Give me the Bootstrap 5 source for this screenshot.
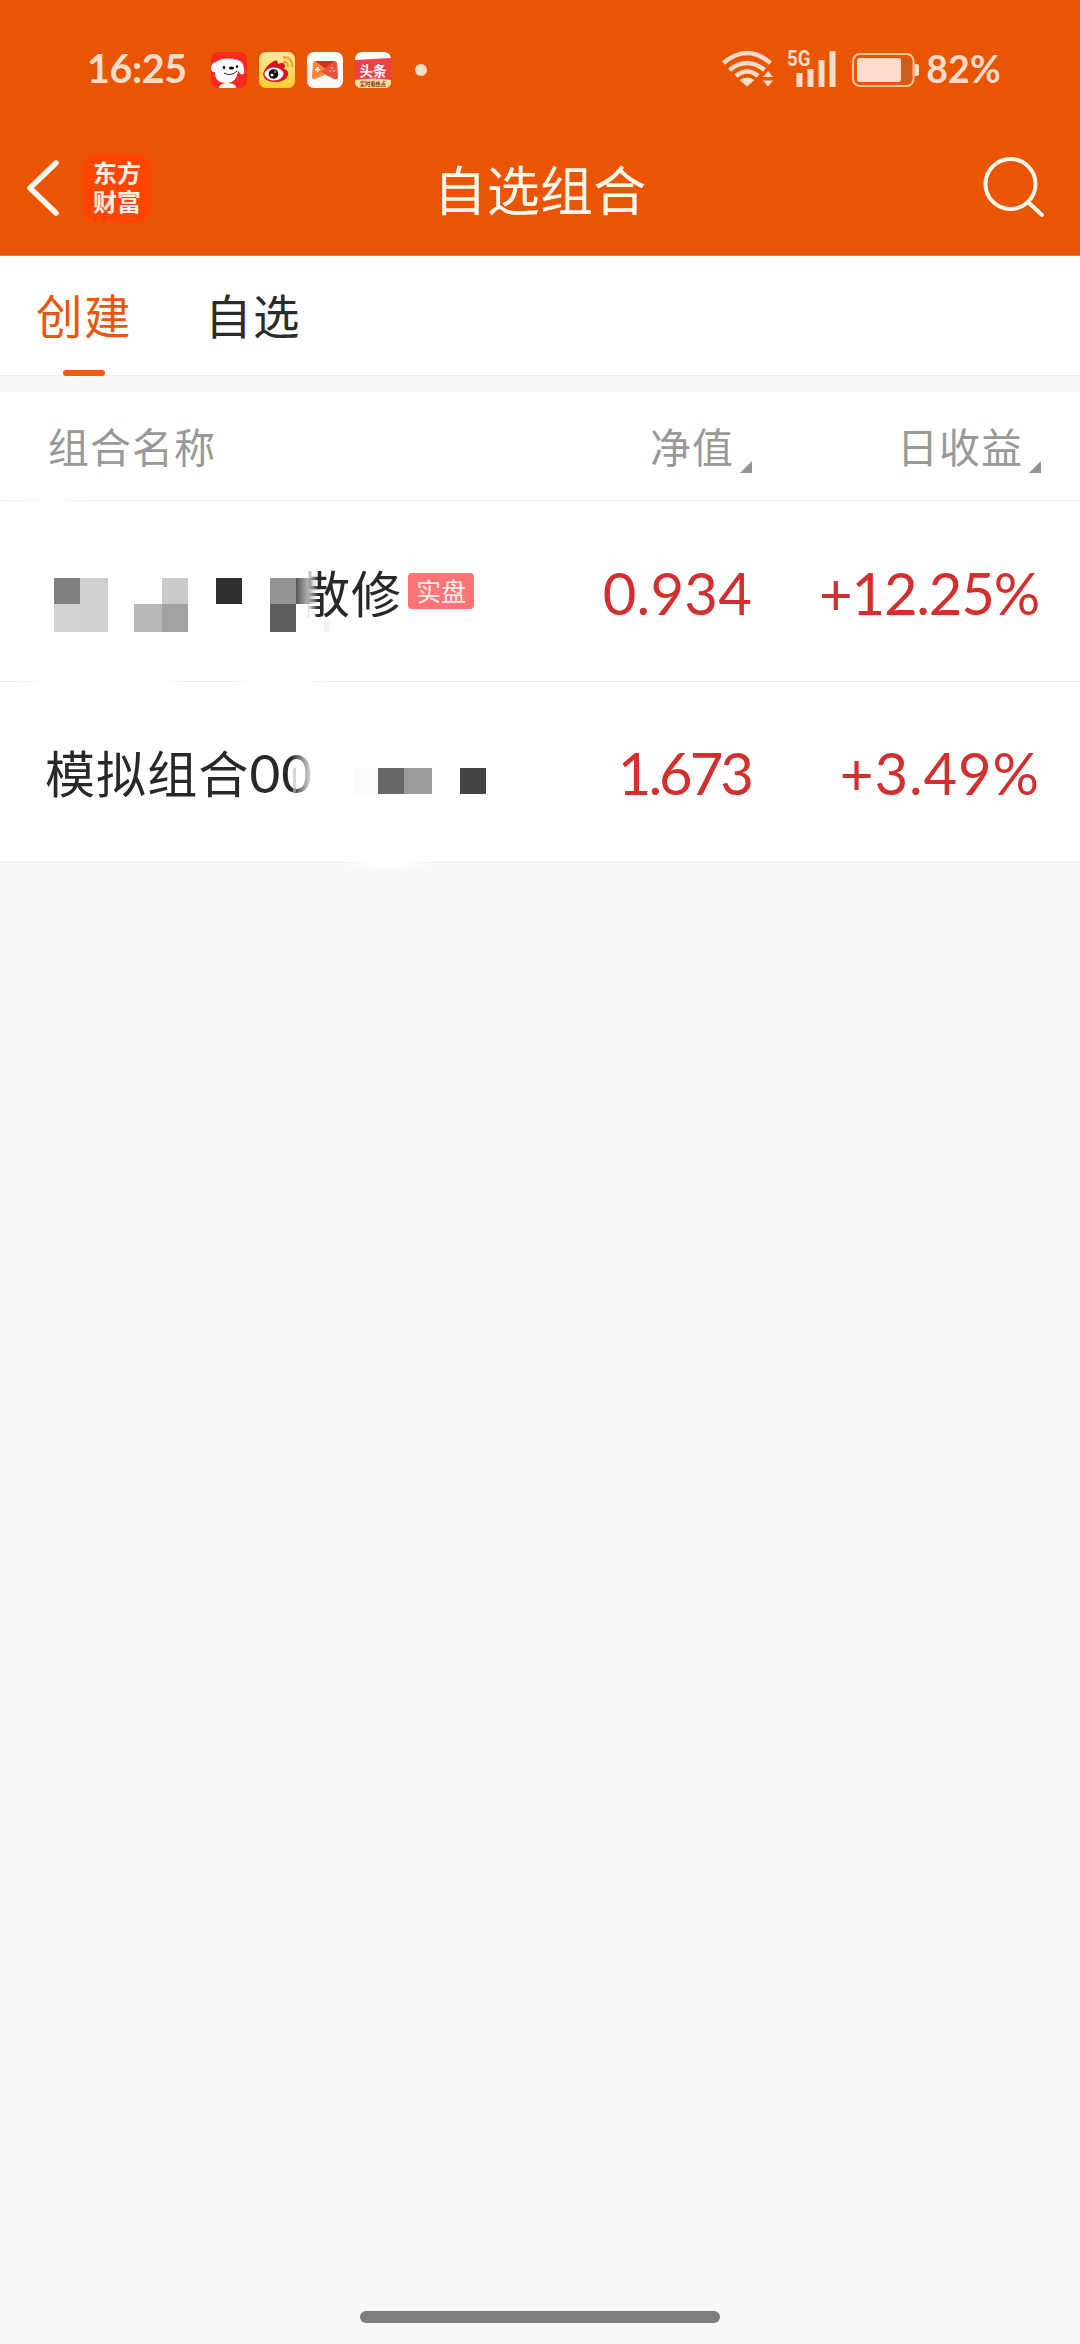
<!DOCTYPE html>
<html lang="zh-CN">
<head>
<meta charset="utf-8">
<meta name="viewport" content="width=device-width, initial-scale=1">
<title>自选组合</title>
<link href="https://cdn.jsdelivr.net/npm/bootstrap@5.3.0/dist/css/bootstrap.min.css" rel="stylesheet">
<style>
body{background:#f6f8fa;font-family:"Noto Sans CJK SC",sans-serif;color:#282828;min-height:2344px;line-height:1}
.top-area{background:#e95502;height:256px;border-bottom:1px solid #c9926b}
.status-line{height:104px;padding:36px 79px 0 87px;color:#fddccb;font-family:Lato,sans-serif;font-weight:700}
.clock{font-size:39.5px;width:124px;letter-spacing:-.4px;padding-top:12px}
.app-icons{gap:12px}
.alert-dot{width:12px;height:12px;border-radius:50%;background:#fddccb;margin-left:12px}
.signals{margin-top:6px}
.pct{font-size:37.5px;margin-left:6px;padding-top:14px;letter-spacing:.2px}
.title-line{height:151px}
.side{width:300px}
.side-start{padding:16px 0 0 26px;gap:23px;height:151px}
.side-end{padding:51px 34px 0 0}
.brand{width:68px;height:68px;border-radius:14px;background:#ff4501;color:#fff3e6;font-size:24px;line-height:29px;font-weight:700;padding-bottom:4px}
.page-title{font-size:53px;color:#fff8ec;letter-spacing:.3px;padding-top:53px}
.tab-strip{height:120px;border-bottom:1px solid #ececee;gap:73px;padding-left:36px;font-size:46.5px}
.tab-item{color:#2b2b2b;text-decoration:none;padding-top:35px;letter-spacing:1.5px;height:120px}
.tab-item.current{color:#e4580f}
.tab-item.current::after{content:"";width:42px;height:6px;border-radius:3px;background:#f0580f;margin-top:auto}
.list-head{height:109px;margin-top:16px;font-size:41px;letter-spacing:1px;color:#999;background:linear-gradient(90deg,#ececec 0,#fff 55px,#ececec 90px) bottom/100% 1px no-repeat #fff;padding:0 39px 2px 48px}
.c-value{width:260px}.c-gain{width:289px}
.list-head .c-value{margin-right:0}
.sorter{gap:6px}
.sorter svg{margin-top:43px}
.fund{height:181px;background:#fff;padding:0 40px 0 45px;font-size:50px;letter-spacing:1.1px}
.fund .c-gain{width:288px}
.fund.first{background:linear-gradient(90deg,#ebebeb 20px,#fff 45px,#fff 165px,#ebebeb 185px,#ebebeb 230px,#fff 250px,#fff 303px,#ebebeb 325px) bottom/100% 1px no-repeat #fff}
.fund.last{border-bottom:1px solid #ebebed}
.fund .num{font-family:Lato,sans-serif;font-size:58px;color:#d22f2f;padding-top:2px}
.sp-a{letter-spacing:.2px}.sp-b{letter-spacing:-1.2px;padding-right:1px}.sp-c{letter-spacing:-3px;padding-right:1px}.sp-d{letter-spacing:.9px}
.mosaic{left:0;top:0}
.tail{padding:0 0 2px 255px}
.tagbox{width:66px;height:36px;border-radius:4px;background:#ff7575;color:#fff0f0;font-size:25px;letter-spacing:0;margin-left:6px}
.zeros{font-family:Lato,sans-serif;font-size:53px;letter-spacing:1px}
.home-bar{width:360px;height:12px;border-radius:6px;background:#7c7d7f;left:360px;top:2311px}
</style>
<script src="https://cdn.jsdelivr.net/npm/bootstrap@5.3.0/dist/js/bootstrap.bundle.min.js"></script>
</head>
<body class="position-relative">
<header class="top-area">
  <div class="status-line d-flex align-items-start">
    <div class="clock">16:25</div>
    <div class="app-icons d-flex align-items-center pt-3">
      <svg width="36" height="36" viewBox="0 0 36 36"><rect width="36" height="36" rx="7" fill="#fa2a1e"/><path d="M8 36q0-3 3-4 6-2 11 0 3 1 3 4z" fill="#fff"/><path d="M5 10Q9 6.500 17 6.500T29 9q3 1 4 8 1 5-2 5.500-2 0-4-4.500-1 13-12 13T4 20q-3 1-4-3 0-6 5-7z" fill="#fff"/><ellipse cx="13" cy="15.500" rx="1.300" ry="1.700"/><ellipse cx="26" cy="14.500" rx="1.200" ry="1.600"/><ellipse cx="20.500" cy="16" rx="2.600" ry="1.600"/><path d="M13 21q7 4 13-2" fill="none" stroke="#222" stroke-width="1"/></svg>
      <svg width="36" height="36" viewBox="0 0 36 36"><defs><linearGradient id="gy" x2="0" y2="1"><stop stop-color="#ffe9a0"/><stop offset="1" stop-color="#ffcf2e"/></linearGradient></defs><rect width="36" height="36" rx="7" fill="url(#gy)"/><path d="M4 22Q6 14 15 9q4-2 4 3 7-3 7 2l-1 3q5 1 4 6-2 7-13 7T4 22z" fill="#d8131e"/><ellipse cx="15" cy="22" rx="9.500" ry="6.500" fill="#fff"/><circle cx="14.500" cy="22" r="4.800" fill="#111"/><circle cx="13" cy="23" r="1.500" fill="#fff"/><circle cx="16" cy="20" r=".8" fill="#fff"/><path d="M24 10q5-1 5 5M24 5q10 0 9 10" fill="none" stroke="#eda52e" stroke-width="2"/></svg>
      <svg width="36" height="36" viewBox="0 0 36 36"><rect width="36" height="36" rx="7" fill="#fafafa"/><path d="M8 9h20L18 17z" fill="#d8321a"/><path d="M8 9l14 11-5 3-9 4q-3 1-3-2l1-14q1-2 2-2z" fill="#f68635"/><path d="M28 9L14 19.500l5 3.500 8 4q4 1 4-2l-1-14q-1-2-2-2z" fill="#ed5138"/><path d="M8 9h20L18 16z" fill="#d8321a"/><path d="M10.500 15v5M8 17.500h5" stroke="#fff" stroke-width="1.500"/><circle cx="25" cy="16" r="1" fill="#fbb"/><circle cx="23" cy="19" r="1" fill="#fbb"/><circle cx="27" cy="19" r="1" fill="#fbb"/></svg>
      <svg width="36" height="36" viewBox="0 0 36 36"><rect width="36" height="36" rx="7" fill="#fff"/><path d="M0 8l36-2v22H0z" fill="#ee4048"/><path d="M0 28q18-3 36 0v2q0 6-7 6H7q-7 0-7-6z" fill="#ffd9a0"/><text x="4.500" y="23.500" font-size="13.500" font-weight="700" fill="#fff" font-family="Noto Sans CJK SC">头条</text><text x="5" y="34" font-size="5.200" font-weight="700" fill="#7a3510" font-family="Noto Sans CJK SC">实时看热点</text></svg>
      <span class="alert-dot"></span>
    </div>
    <div class="ms-auto d-flex align-items-start">
      <svg class="signals" width="200" height="48" viewBox="720 42 200 48" fill="#fddccb"><g fill="none" stroke="#fddccb" stroke-width="4.500"><path d="M723.500 63q23.500-20 47 0M729.500 70q17.500-14 35 0M736 76q11-9 22 0"/></g><path d="M739.500 80q7.500-5 15 0L747 86.500zM763 77l5-6 5 6zM763 80.500h10l-5 6z"/><text x="787" y="66" font-size="21.500" font-family="Roboto" font-weight="700" textLength="23.500" lengthAdjust="spacingAndGlyphs">5G</text><path d="M796.500 73h6v14h-6zM807.500 69h6v18h-6zM818.500 60h6v27h-6zM829.500 51h6v36h-6z"/><rect x="853" y="54" width="60.500" height="32" rx="7" fill="none" stroke="#ffc79a" stroke-width="2"/><rect x="857" y="58" width="52.500" height="24" rx="3.500" fill="#c95d20"/><rect x="857" y="58" width="44" height="24" rx="3"/><path d="M914.500 64h2q2.500 0 2.500 3v6q0 3-2.500 3h-2z"/></svg>
      <span class="pct">82%</span>
    </div>
  </div>
  <div class="title-line d-flex justify-content-between align-items-start">
    <div class="side side-start d-flex align-items-center">
      <svg width="34" height="56" viewBox="0 0 34 56"><path d="M30 3L4 28l26 25" fill="none" stroke="#fff8ec" stroke-width="5.500" stroke-linecap="round" stroke-linejoin="round"/></svg>
      <div class="brand d-flex align-items-center justify-content-center text-center"><span>东方<br>财富</span></div>
    </div>
    <h1 class="page-title m-0 fw-normal">自选组合</h1>
    <div class="side side-end d-flex justify-content-end"><svg width="64" height="64" viewBox="982 155 64 64"><circle cx="1010.500" cy="184" r="25" fill="none" stroke="#fff8ec" stroke-width="4"/><path d="M1029 203l13 12" stroke="#fff8ec" stroke-width="4" stroke-linecap="round"/></svg></div>
  </div>
</header>
<nav class="tab-strip bg-white d-flex">
  <a class="tab-item current d-flex flex-column align-items-center" href="#">创建</a>
  <a class="tab-item" href="#">自选</a>
</nav>
<main>
  <div class="list-head d-flex align-items-center">
    <span class="flex-grow-1">组合名称</span>
    <span class="sorter c-value d-flex justify-content-end align-items-center">净值<svg width="12" height="12"><path d="M12 0v12H0z" fill="#92929a"/></svg></span>
    <span class="sorter c-gain d-flex justify-content-end align-items-center">日收益<svg width="12" height="12"><path d="M12 0v12H0z" fill="#92929a"/></svg></span>
  </div>
  <div class="fund first d-flex align-items-center position-relative">
    <div class="tail flex-grow-1 d-flex align-items-center"><span>散修</span><span class="tagbox d-flex align-items-center justify-content-center">实盘</span></div>
    <span class="num sp-a c-value text-end">0.934</span><span class="num sp-b c-gain text-end">+12.25%</span>
    <svg class="mosaic position-absolute" width="340" height="150" viewBox="0 501 340 150"><defs><linearGradient id="fd"><stop stop-color="#555"/><stop offset="1" stop-color="#555" stop-opacity="0"/></linearGradient><linearGradient id="fw"><stop stop-color="#fff"/><stop offset=".5" stop-color="#fff"/><stop offset="1" stop-color="#fff" stop-opacity="0"/></linearGradient></defs><rect x="296" y="565" width="22" height="58" fill="url(#fw)"/><path d="M54 578h26v26H54z" fill="#808080"/><path d="M80 578h28v54H80z" fill="#d0d0d0"/><path d="M54 604h26v28H54z" fill="#d3d3d3"/><path d="M162 578h26v26h-26z" fill="#cacaca"/><path d="M134 604h28v28h-28z" fill="#b9b9b9"/><path d="M162 604h26v28h-26z" fill="#a1a1a1"/><path d="M216 578h26v26h-26z" fill="#303030"/><path d="M270 578h26v26h-26z" fill="#959595"/><path d="M270 604h26v28h-26z" fill="#5d5d5d"/><path d="M296 578h22v26h-22z" fill="url(#fd)"/><path d="M324 620h5v12h-5z" fill="#eee" opacity=".7"/></svg>
  </div>
  <div class="fund last d-flex align-items-center position-relative">
    <span class="flex-grow-1">模拟组合<span class="zeros">00</span></span>
    <span class="num sp-c c-value text-end">1.673</span><span class="num sp-d c-gain text-end">+3.49%</span>
    <svg class="mosaic position-absolute" width="500" height="190" viewBox="0 682 500 190"><defs><linearGradient id="fz"><stop stop-color="#fff" stop-opacity="0"/><stop offset="1" stop-color="#fff"/></linearGradient><radialGradient id="glow"><stop stop-color="#fff"/><stop offset=".4" stop-color="#fff"/><stop offset="1" stop-color="#fff" stop-opacity="0"/></radialGradient></defs><path d="M291 750h24v50h-24z" fill="url(#fz)"/><path d="M293 768h3v24h-3z" fill="#bbb" opacity=".6"/><path d="M353 768h25v26h-25z" fill="#fbfbfb"/><path d="M378 768h26v26h-26z" fill="#676767"/><path d="M404 768h28v26h-28z" fill="#9b9b9b"/><path d="M460 768h26v26h-26z" fill="#434343"/><ellipse cx="388" cy="861" rx="50" ry="10" fill="url(#glow)"/></svg>
  </div>
</main>
<div class="home-bar position-absolute"></div>
</body>
</html>
